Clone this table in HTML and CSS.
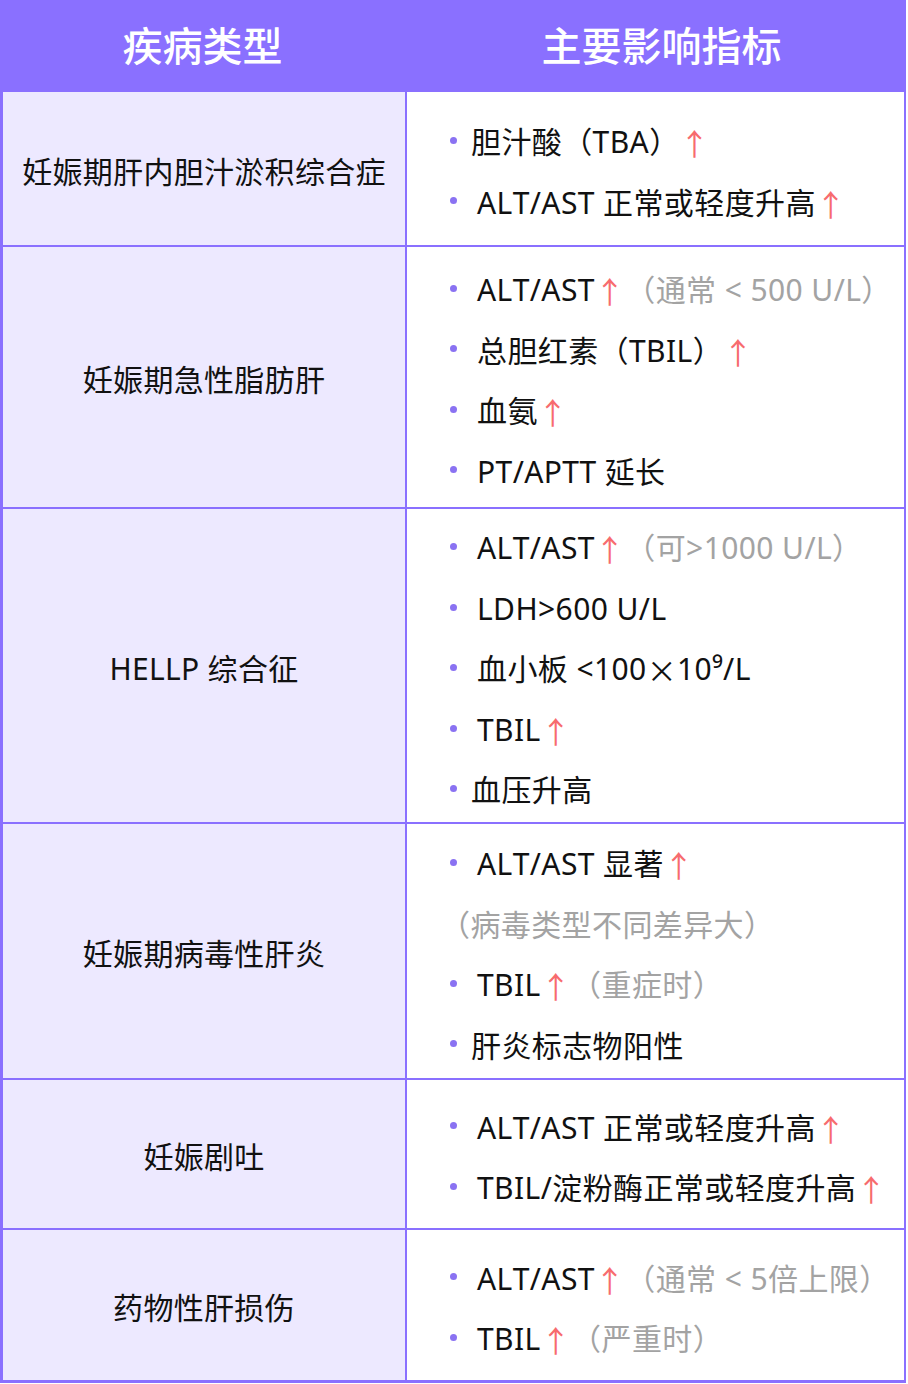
FILE: index.html
```html
<!DOCTYPE html>
<html lang="zh-CN">
<head>
<meta charset="utf-8">
<title>妊娠期肝病指标</title>
<link rel="stylesheet" href="styles.css">
</head>
<body>
<div class="table">
  <div class="head head-left">疾病类型</div>
  <div class="head head-right">主要影响指标</div>

  <div class="name">妊娠期肝内胆汁淤积综合症</div>
  <ul class="items r1">
    <li class="tight"><span class="dot"></span>胆汁酸（TBA）<span class="up">↑</span></li>
    <li><span class="dot"></span>ALT/AST 正常或轻度升高<span class="up">↑</span></li>
  </ul>

  <div class="name">妊娠期急性脂肪肝</div>
  <ul class="items r2">
    <li><span class="dot"></span>ALT/AST<span class="up">↑</span><span class="note">（通常 &lt; 500 U/L）</span></li>
    <li><span class="dot"></span>总胆红素（TBIL）<span class="up">↑</span></li>
    <li><span class="dot"></span>血氨<span class="up">↑</span></li>
    <li><span class="dot"></span>PT/APTT 延长</li>
  </ul>

  <div class="name">HELLP 综合征</div>
  <ul class="items r3">
    <li><span class="dot"></span>ALT/AST<span class="up">↑</span><span class="note">（可&gt;1000 U/L）</span></li>
    <li><span class="dot"></span>LDH&gt;600 U/L</li>
    <li><span class="dot"></span>血小板 &lt;100<span class="cjk">×</span>10⁹/L</li>
    <li><span class="dot"></span>TBIL<span class="up">↑</span></li>
    <li class="tight"><span class="dot"></span>血压升高</li>
  </ul>

  <div class="name">妊娠期病毒性肝炎</div>
  <ul class="items r4">
    <li><span class="dot"></span>ALT/AST 显著<span class="up">↑</span></li>
    <li class="plain"><span class="note">（病毒类型不同差异大）</span></li>
    <li><span class="dot"></span>TBIL<span class="up">↑</span><span class="note">（重症时）</span></li>
    <li class="tight"><span class="dot"></span>肝炎标志物阳性</li>
  </ul>

  <div class="name">妊娠剧吐</div>
  <ul class="items r5">
    <li><span class="dot"></span>ALT/AST 正常或轻度升高<span class="up">↑</span></li>
    <li><span class="dot"></span>TBIL/淀粉酶正常或轻度升高<span class="up">↑</span></li>
  </ul>

  <div class="name">药物性肝损伤</div>
  <ul class="items r6">
    <li><span class="dot"></span>ALT/AST<span class="up">↑</span><span class="note">（通常 &lt; 5倍上限）</span></li>
    <li><span class="dot"></span>TBIL<span class="up">↑</span><span class="note">（严重时）</span></li>
  </ul>
</div>
</body>
</html>
```

FILE: styles.css
```css
html, body {
  margin: 0;
  padding: 0;
  background: #ffffff;
}

body {
  font-family: "Noto Sans", "Noto Sans CJK SC", sans-serif;
  font-kerning: none;
  font-feature-settings: "kern" 0;
  color: #111111;
}

.table {
  width: 906px;
  box-sizing: border-box;
  display: grid;
  grid-template-columns: 402px 497px;
  grid-template-rows: 90px 153px 260px 313px 254px 148px 150px;
  gap: 2px;
  padding: 0 2px 3px 3px;
  background: #8a70ff;
}

.head {
  display: flex;
  align-items: center;
  justify-content: center;
  color: #ffffff;
  font-size: 40px;
  font-weight: 500;
  background: #8a70ff;
}

.head-left {
  margin-left: -3px;
  padding-bottom: 2px;
}

.head-right {
  padding-left: 12px;
  padding-bottom: 2px;
}

.name {
  display: flex;
  align-items: center;
  justify-content: center;
  background: #ede9ff;
  font-size: 30px;
  line-height: 1;
  letter-spacing: 0.3px;
  padding-top: 6px;
  box-sizing: border-box;
}

.items {
  list-style: none;
  margin: 0;
  padding: 8px 0 0 43px;
  background: #ffffff;
  display: flex;
  flex-direction: column;
  justify-content: center;
  box-sizing: border-box;
}

.items li {
  font-size: 30px;
  line-height: 60.5px;
  letter-spacing: 0.4px;
  white-space: nowrap;
  display: flex;
  align-items: center;
}

.dot {
  width: 7px;
  height: 7px;
  border-radius: 50%;
  background: #8a72f2;
  margin-right: 20px;
  flex: none;
  position: relative;
  top: -2px;
}

.items li.tight .dot {
  margin-right: 14px;
}

.items li.plain {
  margin-left: -10px;
}

.up,
.cjk {
  font-family: "Noto Sans CJK SC", sans-serif;
}

.up {
  color: #f76b6e;
}

.note {
  color: #a3a3a3;
}
```
